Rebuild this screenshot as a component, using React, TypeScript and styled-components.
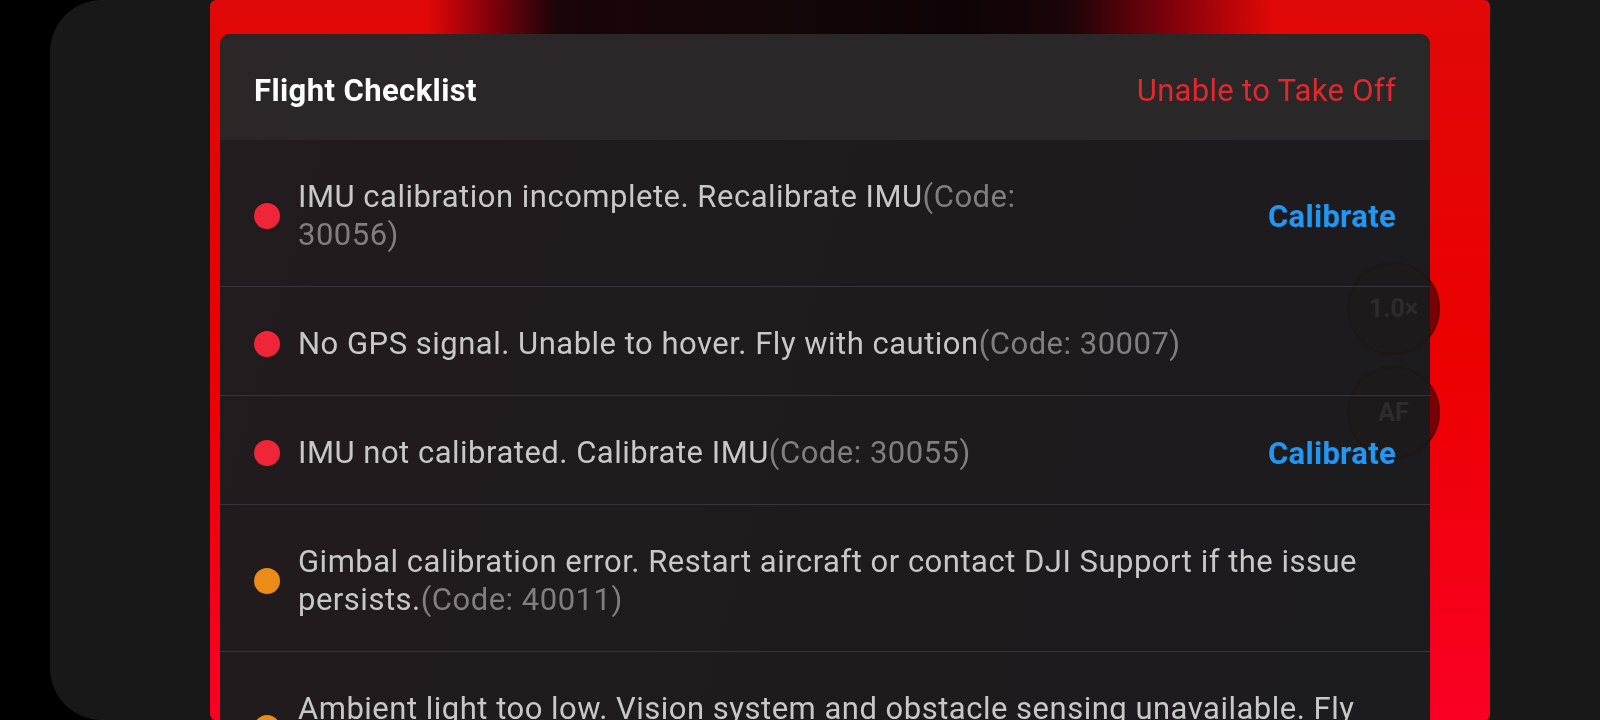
import React from "react";
import styled, { createGlobalStyle } from "styled-components";

const GlobalStyle = createGlobalStyle`
  html, body {
    margin: 0;
    padding: 0;
    background: #000;
    height: 720px;
    overflow: hidden;
  }
  body {
    font-family: Roboto, "Liberation Sans", Arial, sans-serif;
  }
`;

const Page = styled.div`
  display: flex;
  height: 720px;
  width: 1600px;
  background: #000;
  overflow: hidden;
`;

const Screen = styled.div`
  flex: 1;
  margin-left: 50px;
  height: 720px;
  background: #181818;
  border-radius: 52px 0 0 52px;
  padding-left: 160px;
  display: flex;
`;

const Frame = styled.div`
  position: relative;
  width: 1280px;
  height: 720px;
  box-sizing: border-box;
  padding: 34px 60px 0 10px;
  border-radius: 6px;
  overflow: hidden;
  background:
    linear-gradient(
        90deg,
        rgba(0, 0, 0, 0) 17%,
        rgba(110, 0, 12, 0.85) 22%,
        #1a0508 27%,
        #120607 45%,
        #0e0306 58%,
        #1a0508 67%,
        rgba(110, 0, 12, 0.85) 75%,
        rgba(0, 0, 0, 0) 83%
      )
      top / 100% 40px no-repeat,
    linear-gradient(180deg, #e00808 0%, #ec0000 50%, #fa0024 100%);
`;

const Card = styled.section`
  position: relative;
  border-radius: 10px 10px 0 0;
  overflow: hidden;
  background: linear-gradient(105deg, #231b1d 0%, #1f1b1d 50%, #1c1b1d 100%);
`;

const Header = styled.header`
  height: 106px;
  box-sizing: border-box;
  padding: 6px 34px 0;
  display: flex;
  align-items: center;
  justify-content: space-between;
  background: linear-gradient(90deg, #2c2627 0%, #2a2728 55%, #292829 100%);
`;

const Title = styled.h1`
  margin: 0;
  font-family: Roboto, "Liberation Sans", sans-serif;
  font-weight: 700;
  font-size: 31px;
  letter-spacing: 0.4px;
  color: #ffffff;
`;

const Status = styled.span`
  font-family: Roboto, "Liberation Sans", sans-serif;
  font-size: 31px;
  letter-spacing: 0.3px;
  color: #e0282f;
`;

const List = styled.ul`
  list-style: none;
  margin: 0;
  padding: 0;
`;

const Row = styled.li`
  position: relative;
  z-index: 1;
  display: flex;
  align-items: center;
  gap: 18px;
  padding: 38px 34px 32px;
  border-bottom: 1px solid #39343a;
`;

const Dot = styled.span<{ $level: "error" | "warn" }>`
  flex: none;
  width: 26px;
  height: 26px;
  border-radius: 50%;
  background: ${(p) => (p.$level === "error" ? "#f02638" : "#eb8c19")};
`;

const Message = styled.p<{ $narrow?: boolean }>`
  margin: 0;
  flex: 1;
  max-width: ${(p) => (p.$narrow ? "770px" : "none")};
  font-family: Roboto, "Liberation Sans", sans-serif;
  font-size: 31px;
  line-height: 38px;
  letter-spacing: 0.5px;
  color: #c9c8c8;
`;

const Code = styled.span`
  color: #827e7f;
`;

const Action = styled.button`
  margin-left: auto;
  flex: none;
  padding: 0;
  border: none;
  background: none;
  font-family: Roboto, "Liberation Sans", sans-serif;
  font-weight: 700;
  font-size: 31px;
  letter-spacing: 0.3px;
  color: #2196f3;
  cursor: pointer;
`;

const Controls = styled.div`
  position: absolute;
  right: 50px;
  top: 262px;
  display: flex;
  flex-direction: column;
  gap: 11px;
`;

const RoundButton = styled.div`
  position: relative;
  width: 93px;
  height: 93px;
  display: flex;
  align-items: center;
  justify-content: center;
  font-family: Roboto, "Liberation Sans", sans-serif;
  font-weight: 700;
  font-size: 25px;
  color: rgba(255, 255, 255, 0.08);

  &::before {
    content: "";
    position: absolute;
    inset: 0;
    border-radius: 50%;
    box-sizing: border-box;
    border: 2px solid rgb(98, 24, 24);
    background: rgb(122, 26, 27);
    mix-blend-mode: darken;
  }
`;

const ButtonLabel = styled.span`
  position: relative;
`;

type Item = {
  level: "error" | "warn";
  text: string;
  code: string;
  action?: string;
};

const items: Item[] = [
  {
    level: "error",
    text: "IMU calibration incomplete. Recalibrate IMU",
    code: "(Code: 30056)",
    action: "Calibrate",
  },
  {
    level: "error",
    text: "No GPS signal. Unable to hover. Fly with caution",
    code: "(Code: 30007)",
  },
  {
    level: "error",
    text: "IMU not calibrated. Calibrate IMU",
    code: "(Code: 30055)",
    action: "Calibrate",
  },
  {
    level: "warn",
    text: "Gimbal calibration error. Restart aircraft or contact DJI Support if the issue persists.",
    code: "(Code: 40011)",
  },
  {
    level: "warn",
    text: "Ambient light too low. Vision system and obstacle sensing unavailable. Fly with caution.",
    code: "(Code: 80083)",
  },
];

export default function App() {
  return (
    <>
      <GlobalStyle />
      <Page>
        <Screen>
          <Frame>
            <Card>
              <Header>
                <Title>Flight Checklist</Title>
                <Status>Unable to Take Off</Status>
              </Header>
              <List>
                {items.map((it, i) => (
                  <Row key={i}>
                    <Dot $level={it.level} />
                    <Message $narrow={!!it.action}>
                      {it.text}
                      <Code>{it.code}</Code>
                    </Message>
                    {it.action && <Action>{it.action}</Action>}
                  </Row>
                ))}
              </List>
            </Card>
            <Controls>
              <RoundButton>
                <ButtonLabel>1.0×</ButtonLabel>
              </RoundButton>
              <RoundButton>
                <ButtonLabel>AF</ButtonLabel>
              </RoundButton>
            </Controls>
          </Frame>
        </Screen>
      </Page>
    </>
  );
}
